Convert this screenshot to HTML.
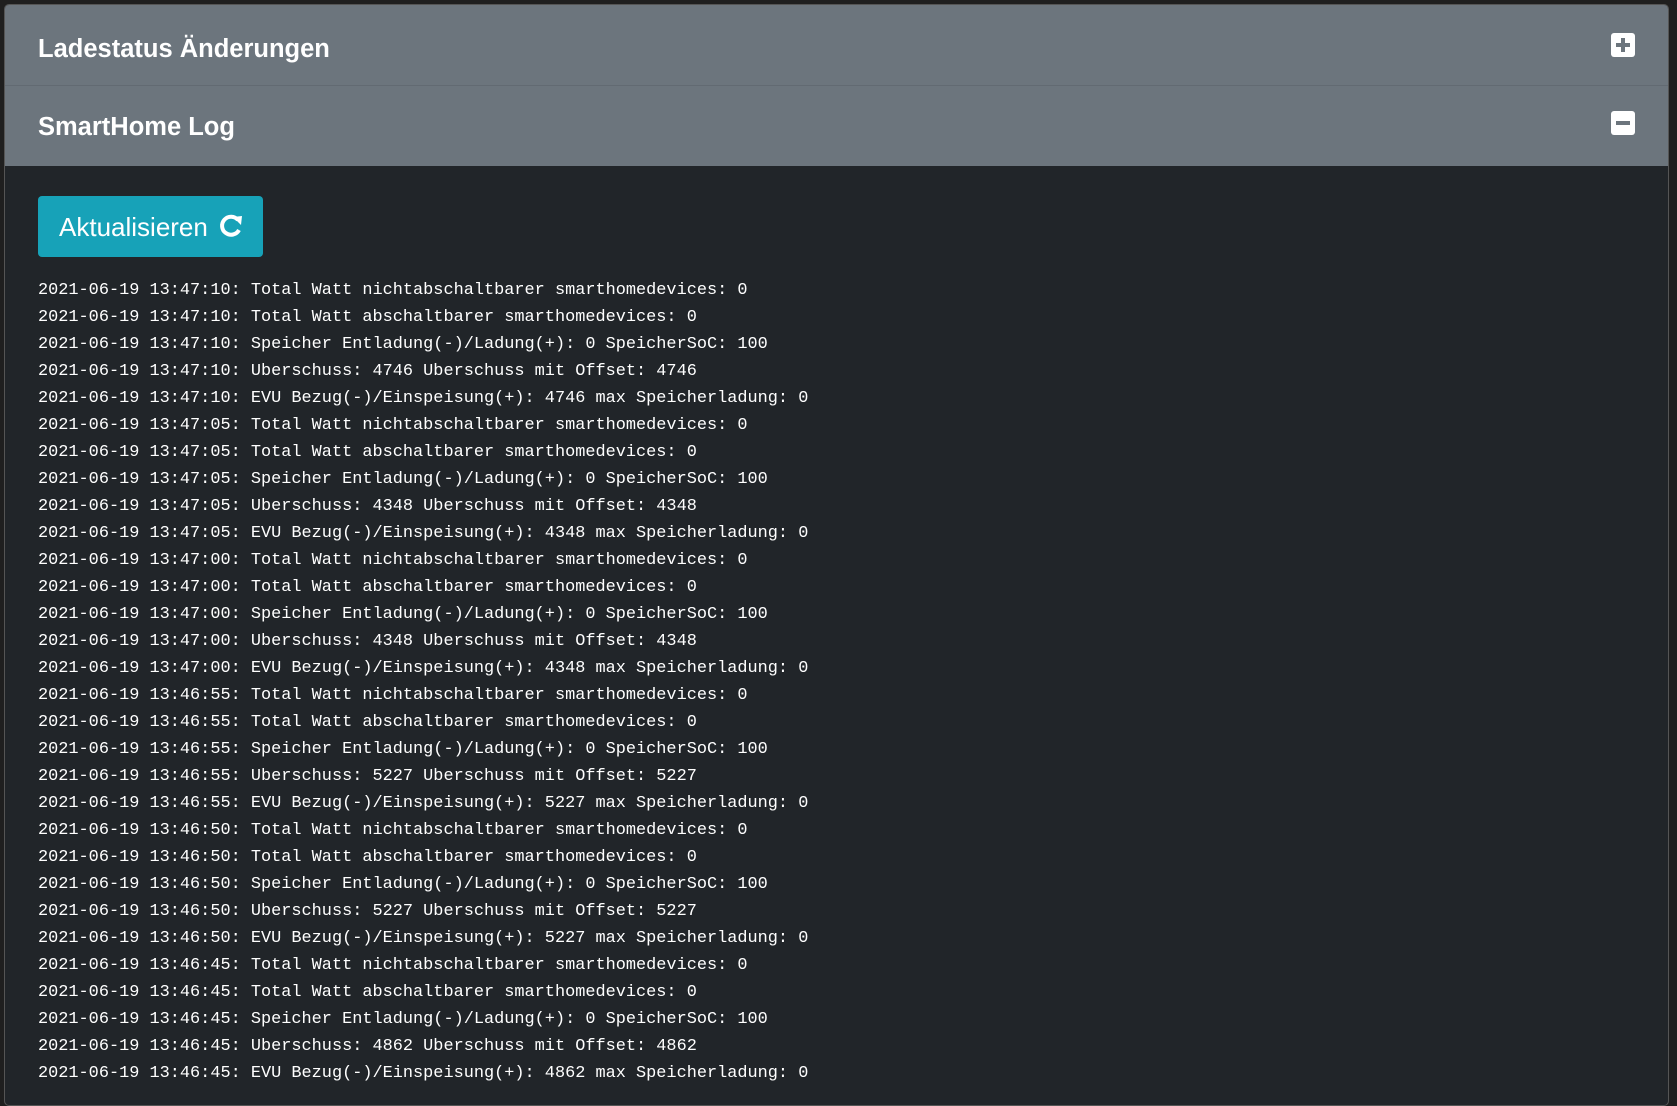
<!DOCTYPE html>
<html><head><meta charset="utf-8"><style>
html,body{margin:0;padding:0;width:1677px;height:1091px;overflow:hidden;background:#1f1f1f;}
.card{position:absolute;left:4px;top:4px;width:1663px;height:1100px;background:#212529;border:1px solid #555;border-radius:5px;overflow:hidden;}
.hd{position:absolute;left:0;width:100%;background:#6c757d;color:#fff;font:bold 25.5px "Liberation Sans",sans-serif;}
.hd span{position:absolute;left:33px;}
.ic{position:absolute;left:1606px;width:24px;height:24px;background:#fff;border-radius:3px;}
.btn{position:absolute;left:33px;top:191px;width:225px;height:61px;background:#17a2b8;border-radius:4px;color:#fff;font:26px "Liberation Sans",sans-serif;}
.log{position:absolute;left:33px;top:272px;font:16.9px/27px "Liberation Mono",monospace;color:#fff;white-space:pre;}
</style></head><body>
<div class="card">
<div class="hd" style="top:0;height:80px;border-bottom:1px solid #626a72"><span style="top:30px">Ladestatus Änderungen</span>
<div class="ic" style="top:28px"><div style="position:absolute;left:5px;top:10px;width:14px;height:4px;background:#6c757d"></div><div style="position:absolute;left:10px;top:5px;width:4px;height:14px;background:#6c757d"></div></div></div>
<div class="hd" style="top:81px;height:80px"><span style="top:27px">SmartHome Log</span>
<div class="ic" style="top:25px"><div style="position:absolute;left:5px;top:10px;width:14px;height:4px;background:#6c757d"></div></div></div>
<div class="btn"><span style="position:absolute;left:21px;top:16px">Aktualisieren</span>
<svg style="position:absolute;left:180px;top:17px" width="26" height="26" viewBox="0 0 26 26"><path d="M20 7 A9 9 0 1 0 21 17" fill="none" stroke="#fff" stroke-width="4"/><path d="M15 4 L24 3 L23 12 Z" fill="#fff"/></svg></div>
<div class="log">2021-06-19 13:47:10: Total Watt nichtabschaltbarer smarthomedevices: 0
2021-06-19 13:47:10: Total Watt abschaltbarer smarthomedevices: 0
2021-06-19 13:47:10: Speicher Entladung(-)/Ladung(+): 0 SpeicherSoC: 100
2021-06-19 13:47:10: Uberschuss: 4746 Uberschuss mit Offset: 4746
2021-06-19 13:47:10: EVU Bezug(-)/Einspeisung(+): 4746 max Speicherladung: 0
2021-06-19 13:47:05: Total Watt nichtabschaltbarer smarthomedevices: 0
2021-06-19 13:47:05: Total Watt abschaltbarer smarthomedevices: 0
2021-06-19 13:47:05: Speicher Entladung(-)/Ladung(+): 0 SpeicherSoC: 100
2021-06-19 13:47:05: Uberschuss: 4348 Uberschuss mit Offset: 4348
2021-06-19 13:47:05: EVU Bezug(-)/Einspeisung(+): 4348 max Speicherladung: 0
2021-06-19 13:47:00: Total Watt nichtabschaltbarer smarthomedevices: 0
2021-06-19 13:47:00: Total Watt abschaltbarer smarthomedevices: 0
2021-06-19 13:47:00: Speicher Entladung(-)/Ladung(+): 0 SpeicherSoC: 100
2021-06-19 13:47:00: Uberschuss: 4348 Uberschuss mit Offset: 4348
2021-06-19 13:47:00: EVU Bezug(-)/Einspeisung(+): 4348 max Speicherladung: 0
2021-06-19 13:46:55: Total Watt nichtabschaltbarer smarthomedevices: 0
2021-06-19 13:46:55: Total Watt abschaltbarer smarthomedevices: 0
2021-06-19 13:46:55: Speicher Entladung(-)/Ladung(+): 0 SpeicherSoC: 100
2021-06-19 13:46:55: Uberschuss: 5227 Uberschuss mit Offset: 5227
2021-06-19 13:46:55: EVU Bezug(-)/Einspeisung(+): 5227 max Speicherladung: 0
2021-06-19 13:46:50: Total Watt nichtabschaltbarer smarthomedevices: 0
2021-06-19 13:46:50: Total Watt abschaltbarer smarthomedevices: 0
2021-06-19 13:46:50: Speicher Entladung(-)/Ladung(+): 0 SpeicherSoC: 100
2021-06-19 13:46:50: Uberschuss: 5227 Uberschuss mit Offset: 5227
2021-06-19 13:46:50: EVU Bezug(-)/Einspeisung(+): 5227 max Speicherladung: 0
2021-06-19 13:46:45: Total Watt nichtabschaltbarer smarthomedevices: 0
2021-06-19 13:46:45: Total Watt abschaltbarer smarthomedevices: 0
2021-06-19 13:46:45: Speicher Entladung(-)/Ladung(+): 0 SpeicherSoC: 100
2021-06-19 13:46:45: Uberschuss: 4862 Uberschuss mit Offset: 4862
2021-06-19 13:46:45: EVU Bezug(-)/Einspeisung(+): 4862 max Speicherladung: 0</div>
</div>
</body></html>
